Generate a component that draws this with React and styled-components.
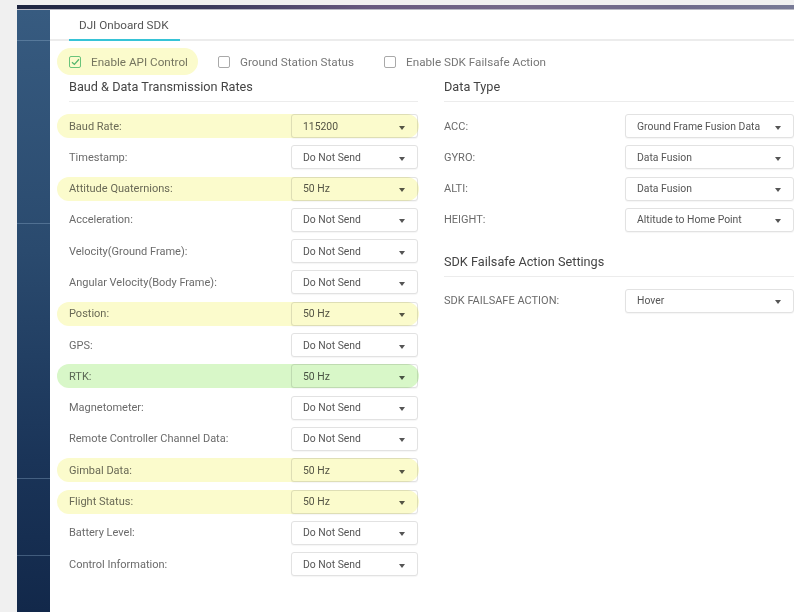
import React from "react";
import styled, { createGlobalStyle, css } from "styled-components";

const Global = createGlobalStyle`
  html, body { margin: 0; padding: 0; background: #f0f0f0; }
  body { font-family: Roboto, "Liberation Sans", Arial, sans-serif; }
  * { box-sizing: border-box; }
`;

const Shell = styled.div`
  width: 794px;
  height: 612px;
  padding: 5px 0 0 17px;
  display: flex;
  flex-direction: column;
  overflow: hidden;
`;

const TopStrip = styled.div`
  height: 5px;
  flex: none;
  background: linear-gradient(90deg, #1d2540 0%, #3b3a5c 25%, #66587e 45%, #756a8a 65%, #6e6a8a 85%, #787a96 100%);
  border-bottom: 1px solid #b9b9c4;
`;

const Body = styled.div`
  flex: 1;
  display: flex;
  min-height: 0;
`;

const Sidebar = styled.div`
  width: 33px;
  flex: none;
  display: flex;
  flex-direction: column;
  background: linear-gradient(180deg, #375b80 0%, #2a4a6e 40%, #1a3458 75%, #12284a 100%);
`;

const SideItem = styled.div`
  height: ${(p) => p.$h}px;
  flex: none;
  border-bottom: 1px solid rgba(150, 180, 210, 0.35);
`;

const Panel = styled.div`
  flex: 1;
  background: #fff;
  display: flex;
  flex-direction: column;
  padding-left: 19px;
`;

const TabBar = styled.div`
  height: 31px;
  flex: none;
  display: flex;
  border-bottom: 2px solid #ececec;
  margin-left: -19px;
  padding-left: 19px;
`;

const Tab = styled.div`
  width: 111px;
  padding-left: 10px;
  display: flex;
  align-items: center;
  font-size: 11.7px;
  color: #555;
  margin-bottom: -2px;
  border-bottom: 2px solid #36c3d6;
`;

const Highlighted = css`
  position: relative;
  &::after {
    content: "";
    position: absolute;
    left: -12px;
    right: ${(p) => p.$right ?? 0}px;
    top: 0;
    bottom: 0;
    border-radius: 14px;
    background: ${(p) => (p.$hl === "green" ? "#d8f7c8" : "#fbfbcc")};
    mix-blend-mode: multiply;
    pointer-events: none;
  }
`;

const OptionRow = styled.div`
  margin-top: 7px;
  height: 27px;
  flex: none;
  display: flex;
  align-items: stretch;
  gap: 30px;
`;

const CheckItem = styled.label`
  display: flex;
  align-items: center;
  gap: 10px;
  font-size: 11.7px;
  color: #777;
  ${(p) => p.$hl && Highlighted}
`;

const Box = styled.span`
  width: 12px;
  height: 12px;
  border-radius: 2px;
  border: 1px solid ${(p) => (p.$on ? "#6cc79a" : "#a9a9a9")};
  background: #fff;
  display: flex;
  align-items: center;
  justify-content: center;
`;

const Columns = styled.div`
  display: grid;
  grid-template-columns: 349px 1fr;
  column-gap: 26px;
  margin-top: 2px;
`;

const Column = styled.div`
  display: flex;
  flex-direction: column;
`;

const SectionTitle = styled.div`
  font-size: 12.7px;
  line-height: 20px;
  color: #444;
  padding-bottom: 4px;
  border-bottom: 1px solid #ececec;
  margin-top: ${(p) => p.$mt ?? 0}px;
  margin-bottom: 12px;
`;

const Rows = styled.div`
  display: flex;
  flex-direction: column;
  gap: 7.3px;
`;

const Row = styled.div`
  height: 24px;
  display: flex;
  align-items: center;
  justify-content: space-between;
  ${(p) => p.$hl && Highlighted}
`;

const Label = styled.span`
  font-size: 11px;
  color: #6b6b6b;
`;

const Select = styled.div`
  width: ${(p) => p.$w}px;
  height: 24px;
  border: 1px solid #e2e2e2;
  border-radius: 3px;
  box-shadow: 0 1px 1px rgba(0, 0, 0, 0.04);
  background: #fff;
  display: flex;
  align-items: center;
  justify-content: space-between;
  padding: 0 12px 0 11px;
  font-size: 10.4px;
  color: #555;
`;

const Caret = styled.span`
  width: 0;
  height: 0;
  border-left: 3.5px solid transparent;
  border-right: 3.5px solid transparent;
  border-top: 4px solid #555;
  margin-top: 3px;
`;

const rates = [
  ["Baud Rate:", "115200", "y"],
  ["Timestamp:", "Do Not Send"],
  ["Attitude Quaternions:", "50 Hz", "y"],
  ["Acceleration:", "Do Not Send"],
  ["Velocity(Ground Frame):", "Do Not Send"],
  ["Angular Velocity(Body Frame):", "Do Not Send"],
  ["Postion:", "50 Hz", "y"],
  ["GPS:", "Do Not Send"],
  ["RTK:", "50 Hz", "green"],
  ["Magnetometer:", "Do Not Send"],
  ["Remote Controller Channel Data:", "Do Not Send"],
  ["Gimbal Data:", "50 Hz", "y"],
  ["Flight Status:", "50 Hz", "y"],
  ["Battery Level:", "Do Not Send"],
  ["Control Information:", "Do Not Send"],
];

const dataTypes = [
  ["ACC:", "Ground Frame Fusion Data"],
  ["GYRO:", "Data Fusion"],
  ["ALTI:", "Data Fusion"],
  ["HEIGHT:", "Altitude to Home Point"],
];

function Dropdown({ value, width }) {
  return (
    <Select $w={width}>
      <span>{value}</span>
      <Caret />
    </Select>
  );
}

function Check({ on, children, hl }) {
  return (
    <CheckItem $hl={hl} $right={-10}>
      <Box $on={on}>
        {on && (
          <svg width="9" height="8" viewBox="0 0 9 8">
            <path d="M1 4.2 L3.4 6.4 L8 1.2" fill="none" stroke="#55b98a" strokeWidth="1.3" />
          </svg>
        )}
      </Box>
      {children}
    </CheckItem>
  );
}

export default function App() {
  return (
    <>
      <Global />
      <Shell>
        <TopStrip />
        <Body>
          <Sidebar>
            <SideItem $h={31} />
            <SideItem $h={183} />
            <SideItem $h={255} />
            <SideItem $h={77} />
          </Sidebar>
          <Panel>
            <TabBar>
              <Tab>DJI Onboard SDK</Tab>
            </TabBar>
            <OptionRow>
              <Check on hl="y">Enable API Control</Check>
              <Check>Ground Station Status</Check>
              <Check>Enable SDK Failsafe Action</Check>
            </OptionRow>
            <Columns>
              <Column>
                <SectionTitle>Baud &amp; Data Transmission Rates</SectionTitle>
                <Rows>
                  {rates.map(([label, value, hl]) => (
                    <Row key={label} $hl={hl} $right={-1}>
                      <Label>{label}</Label>
                      <Dropdown value={value} width={127} />
                    </Row>
                  ))}
                </Rows>
              </Column>
              <Column>
                <SectionTitle>Data Type</SectionTitle>
                <Rows>
                  {dataTypes.map(([label, value]) => (
                    <Row key={label}>
                      <Label>{label}</Label>
                      <Dropdown value={value} width={169} />
                    </Row>
                  ))}
                </Rows>
                <SectionTitle $mt={20}>SDK Failsafe Action Settings</SectionTitle>
                <Rows>
                  <Row>
                    <Label>SDK FAILSAFE ACTION:</Label>
                    <Dropdown value="Hover" width={169} />
                  </Row>
                </Rows>
              </Column>
            </Columns>
          </Panel>
        </Body>
      </Shell>
    </>
  );
}
